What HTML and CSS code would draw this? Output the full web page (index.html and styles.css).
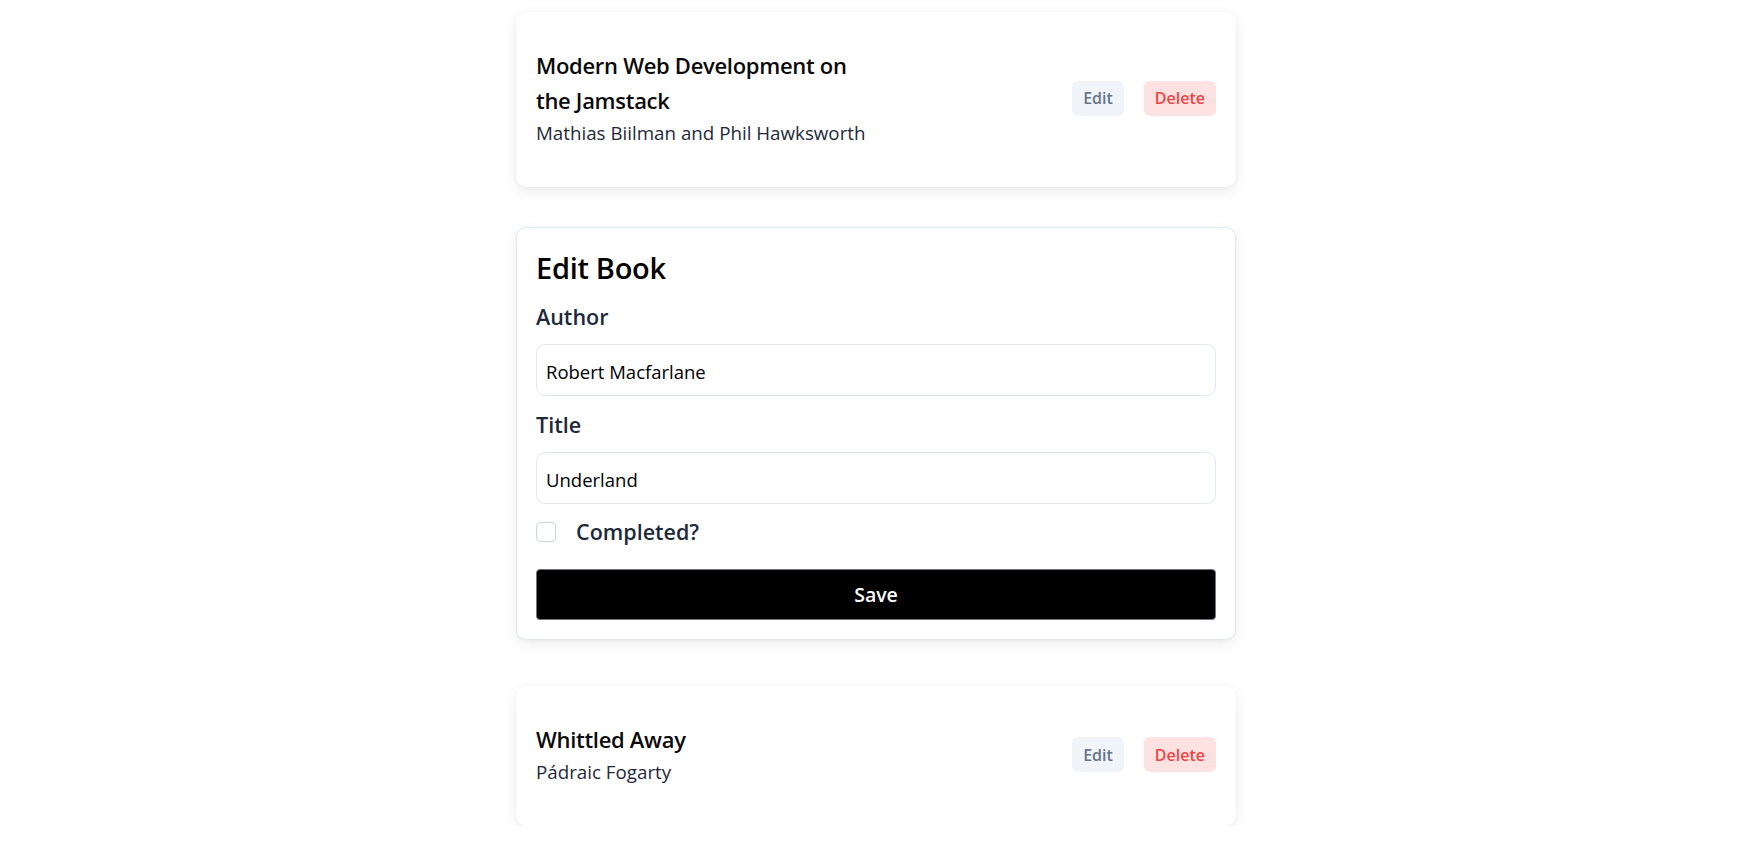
FILE: index.html
```html
<!DOCTYPE html>
<html lang="en">
<head>
<meta charset="utf-8">
<title>Books</title>
<link rel="stylesheet" href="styles.css">
</head>
<body>
<main class="list">
  <section class="book-card first">
    <div class="info">
      <h2 class="book-title">Modern Web Development on the Jamstack</h2>
      <p class="book-author">Mathias Biilman and Phil Hawksworth</p>
    </div>
    <div class="actions">
      <button class="btn btn-edit">Edit</button>
      <button class="btn btn-delete">Delete</button>
    </div>
  </section>

  <form class="edit-card">
    <h1 class="edit-heading">Edit Book</h1>
    <label class="field-label" for="author">Author</label>
    <input class="field-input" id="author" type="text" value="Robert Macfarlane">
    <label class="field-label title-label" for="title">Title</label>
    <input class="field-input" id="title" type="text" value="Underland">
    <div class="check-row">
      <input class="check" id="completed" type="checkbox">
      <label class="field-label check-label" for="completed">Completed?</label>
    </div>
    <button class="save" type="button">Save</button>
  </form>

  <section class="book-card last">
    <div class="info">
      <h2 class="book-title">Whittled Away</h2>
      <p class="book-author">Pádraic Fogarty</p>
    </div>
    <div class="actions">
      <button class="btn btn-edit">Edit</button>
      <button class="btn btn-delete">Delete</button>
    </div>
  </section>
</main>
</body>
</html>
```
FILE: styles.css
```css
* { box-sizing: border-box; }
html, body { margin: 0; padding: 0; background: #fff; }
body {
  font-family: "Open Sans", "Noto Sans", sans-serif;
  color: #000;
  display: flex;
  justify-content: center;
  padding: 12px 6px 0 0;
}
.list {
  width: 720px;
  display: flex;
  flex-direction: column;
}
.book-card {
  display: flex;
  align-items: center;
  justify-content: space-between;
  background: #fff;
  border-radius: 10px;
  padding: 36px 20px 39px 20px;
  box-shadow: 0 4px 14px rgba(0, 0, 0, 0.08), 0 1px 3px rgba(0, 0, 0, 0.04);
}
.book-card.last { margin-top: 46px; }
.info { max-width: 335px; }
.book-title {
  margin: 0;
  font-size: 22px;
  font-weight: 600;
  line-height: 35px;
  letter-spacing: -0.3px;
  color: #0a0a0a;
}
.book-author {
  margin: 0;
  font-size: 18.75px;
  line-height: 30px;
  color: #1e293b;
}
.actions {
  display: flex;
  gap: 20px;
}
.btn {
  font-family: inherit;
  height: 35px;
  padding: 0 11px;
  border: none;
  border-radius: 6px;
  font-size: 16px;
  font-weight: 600;
  cursor: pointer;
}
.btn-edit { background: #f1f5f9; color: #64748b; }
.btn-delete { background: #fee2e2; color: #ef4444; }

.edit-card {
  margin-top: 40px;
  display: flex;
  flex-direction: column;
  background: #fff;
  border: 1px solid #e2e8f0;
  border-radius: 10px;
  padding: 22px 19px 19px 19px;
  box-shadow: 0 4px 14px rgba(0, 0, 0, 0.07), 0 1px 3px rgba(0, 0, 0, 0.03);
}
.edit-heading {
  margin: 0 0 15px 0;
  font-size: 29px;
  font-weight: 600;
  line-height: 36px;
  letter-spacing: -0.3px;
  color: #000;
}
.field-label {
  font-size: 21.5px;
  font-weight: 600;
  line-height: 32px;
  color: #1e293b;
}
.title-label { margin-top: 13px; }
.field-input {
  margin-top: 11px;
  height: 52px;
  width: 100%;
  border: 1px solid #e2e8f0;
  border-radius: 9px;
  padding: 2px 9px 0 9px;
  font-family: inherit;
  font-size: 18.5px;
  color: #000;
  background: #fff;
  outline: none;
}
.check-row {
  margin-top: 12px;
  display: flex;
  align-items: center;
  gap: 20px;
  height: 32px;
}
.check {
  appearance: none;
  -webkit-appearance: none;
  margin: 0;
  width: 20px;
  height: 20px;
  border: 1px solid #cbd5e1;
  border-radius: 4px;
  background: #fff;
}
.save {
  margin-top: 21px;
  height: 51px;
  width: 100%;
  background: #000;
  color: #fff;
  border: 1px solid #6b7280;
  border-radius: 4px;
  font-family: inherit;
  font-size: 19.5px;
  font-weight: 600;
  cursor: pointer;
}
```
